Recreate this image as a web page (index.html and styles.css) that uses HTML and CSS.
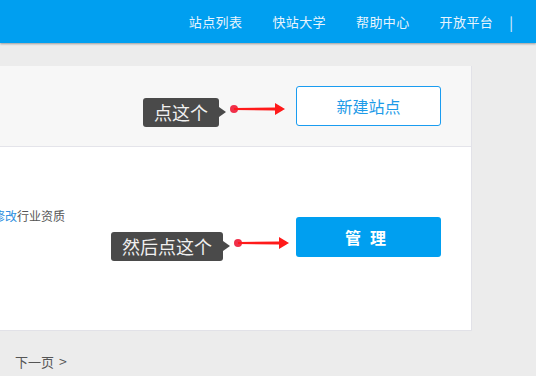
FILE: index.html
```html
<!DOCTYPE html>
<html lang="zh-CN">
<head>
    <meta charset="UTF-8">
    <title>站点列表</title>
    <link rel="stylesheet" href="styles.css">
</head>
<body>
    <div class="header">
        <ul class="nav">
            <li><a href="#">站点列表</a></li>
            <li><a href="#">快站大学</a></li>
            <li><a href="#">帮助中心</a></li>
            <li><a href="#">开放平台</a></li>
            <li class="sep">|</li>
        </ul>
    </div>

    <div class="main">
        <div class="card">
            <div class="card-top">
                <span class="tip tip-1">点这个</span>
                <svg class="arrow arrow-1" width="56" height="14" viewBox="0 0 56 14">
                    <circle cx="4" cy="7" r="4" fill="#f0304a"/>
                    <polygon points="4,6 45,5.5 45,1 55,7 45,13 45,8.5 4,8" fill="#ff1a1a"/>
                </svg>
                <button class="btn-outline">新建站点</button>
            </div>
            <div class="card-body">
                <div class="site-info">
                    <a href="#" class="link">修改</a>行业资质
                </div>
                <div class="actions">
                    <span class="tip tip-2">然后点这个</span>
                    <svg class="arrow arrow-2" width="56" height="14" viewBox="0 0 56 14">
                        <circle cx="4" cy="7" r="4" fill="#f0304a"/>
                        <polygon points="4,6 45,5.5 45,1 55,7 45,13 45,8.5 4,8" fill="#ff1a1a"/>
                    </svg>
                    <button class="btn-primary">管理</button>
                </div>
            </div>
        </div>

        <div class="pager">下一页 <span class="next">&gt;</span></div>
    </div>
</body>
</html>
```

FILE: styles.css
```css
body {
    margin: 0;
    background-color: #ececec;
    font-family: "Noto Sans CJK SC", "Noto Sans", sans-serif;
    overflow: hidden;
}
.header {
    height: 43px;
    background-color: #009ff0;
    box-shadow: 0 1px 2px rgba(0,0,0,0.35);
}
.nav {
    list-style: none;
    margin: 0;
    padding: 0 23px 0 0;
    height: 43px;
    display: flex;
    justify-content: flex-end;
    align-items: center;
}
.nav li {
    margin-left: 30px;
    font-size: 13px;
    line-height: 18px;
    color: #e8f4fd;
}
.nav a {
    color: #e8f4fd;
    text-decoration: none;
    letter-spacing: 0.4px;
}
.nav li.sep {
    margin-left: 16px;
    font-size: 14px;
}
.main {
    padding-top: 23px;
}
.card {
    margin-left: -100px;
    width: 571px;
    background: white;
    border-right: 1px solid #e2e2e8;
    border-bottom: 1px solid #e2e2e8;
}
.card-top {
    height: 80px;
    background-color: #f7f7f7;
    border-bottom: 1px solid #e4e4ea;
    display: flex;
    justify-content: flex-end;
    align-items: center;
    padding-right: 30px;
}
.tip {
    position: relative;
    display: inline-block;
    height: 29px;
    line-height: 29px;
    padding: 0 11px;
    background-color: #4a4a4a;
    color: #f0f0f0;
    font-size: 18px;
    border-radius: 3px;
}
.tip::after {
    content: "";
    position: absolute;
    right: -7px;
    top: 9px;
    border-left: 7px solid #4a4a4a;
    border-top: 5px solid transparent;
    border-bottom: 5px solid transparent;
}
.tip-1 {
    margin-top: 13px;
}
.arrow-1 {
    margin: 6px 10px 0 11px;
}
.btn-outline {
    width: 145px;
    height: 40px;
    background: white;
    border: 1px solid #1a9cf0;
    border-radius: 3px;
    color: #1e9be8;
    font-family: inherit;
    font-size: 16px;
    cursor: pointer;
}
.card-body {
    height: 183px;
    display: flex;
    justify-content: space-between;
    align-items: center;
    padding: 0 30px 0 93px;
}
.site-info {
    margin-top: -46px;
    font-size: 12px;
    color: #555;
}
.link {
    color: #2d8fe0;
    text-decoration: none;
}
.actions {
    display: flex;
    align-items: center;
    margin-bottom: 3px;
}
.tip-2 {
    margin-top: 19px;
}
.arrow-2 {
    margin: 11px 6px 0 11px;
}
.btn-primary {
    width: 145px;
    height: 40px;
    background-color: #009ff0;
    border: none;
    border-radius: 3px;
    color: white;
    font-family: inherit;
    font-size: 16px;
    font-weight: bold;
    letter-spacing: 9px;
    padding-left: 9px;
    cursor: pointer;
}
.pager {
    padding: 20px 0 0 15px;
    font-size: 13px;
    color: #555;
}
.next {
    margin-left: 2px;
    font-size: 14px;
}
```
